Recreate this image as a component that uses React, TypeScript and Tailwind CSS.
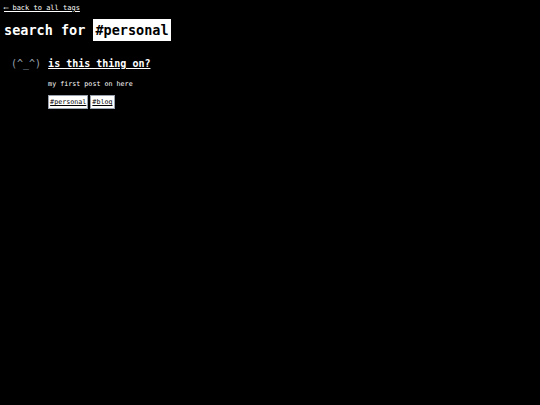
import React from 'react';

const mono = { fontFamily: '"DejaVu Sans Mono", "Liberation Mono", monospace' };

const tags = ['#personal', '#blog'];

export default function App() {
  return (
    <div className="min-h-[405px] w-full bg-black text-white leading-none" style={mono}>
      <div className="px-1 pt-[4px]">
        <a href="#" className="block text-[7px] leading-[9px] text-white underline">
          ⟵ back to all tags
        </a>
        <h1 className="mt-[6px] flex items-center text-[13.5px] font-bold leading-[22px]">
          <span>search for&nbsp;</span>
          <span className="bg-white px-[2px] text-black">#personal</span>
        </h1>
      </div>

      <div className="mt-[15px] flex gap-[7px] pl-[11px]">
        <div className="text-[10px] leading-[16px] text-gray-400">(^_^)</div>
        <div className="flex flex-col items-start">
          <a href="#" className="block text-[10px] font-bold leading-[16px] text-white underline">
            is this thing on?
          </a>
          <p className="mt-[8px] text-[6.7px] leading-[9px]">my first post on here</p>
          <div className="mt-[6px] flex gap-[2px]">
            {tags.map((t) => (
              <span
                key={t}
                className="border border-gray-400 bg-white px-[1px] text-[6.7px] leading-[12px] text-black underline"
              >
                {t}
              </span>
            ))}
          </div>
        </div>
      </div>
    </div>
  );
}
